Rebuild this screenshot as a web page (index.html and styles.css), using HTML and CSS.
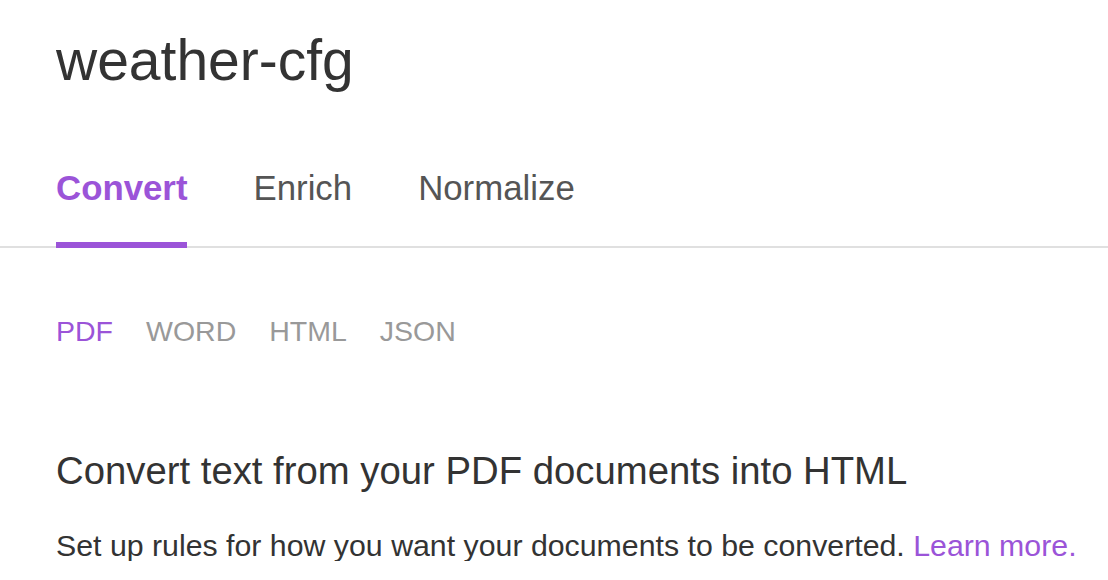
FILE: index.html
```html
<!DOCTYPE html>
<html lang="en">
<head>
<meta charset="utf-8">
<title>weather-cfg</title>
<link rel="stylesheet" href="styles.css">
</head>
<body>
  <header class="page-header">
    <h1 class="title">weather-cfg</h1>
  </header>
  <nav class="tabs">
    <a class="tab tab--active">Convert</a>
    <a class="tab">Enrich</a>
    <a class="tab">Normalize</a>
  </nav>
  <main class="content">
    <nav class="subtabs">
      <a class="subtab subtab--active">PDF</a>
      <a class="subtab">WORD</a>
      <a class="subtab">HTML</a>
      <a class="subtab">JSON</a>
    </nav>
    <h2 class="heading">Convert text from your PDF documents into HTML</h2>
    <p class="desc">Set up rules for how you want your documents to be converted. <a class="link">Learn more.</a></p>
  </main>
</body>
</html>
```
FILE: styles.css
```css
html, body {
  margin: 0;
  padding: 0;
  background: #ffffff;
}
body {
  font-family: "Liberation Sans", Arial, Helvetica, sans-serif;
  color: #333333;
  overflow: hidden;
}
.page-header {
  padding: 32px 56px 0;
}
.title {
  margin: 0;
  font-size: 57px;
  line-height: 57px;
  font-weight: normal;
  color: #333333;
}
.tabs {
  display: flex;
  gap: 66px;
  margin-top: 81px;
  padding: 0 56px;
  border-bottom: 2px solid #e0e0e0;
}
.tab {
  font-size: 34.8px;
  line-height: 35px;
  color: #555555;
  border-bottom: 6px solid transparent;
  margin-bottom: -2px;
  padding-bottom: 37px;
}
.tab--active {
  color: #9b54d8;
  font-weight: bold;
  border-bottom-color: #9b54d8;
}
.content {
  padding: 0 56px;
}
.subtabs {
  display: flex;
  gap: 33px;
  margin-top: 69px;
}
.subtab {
  font-size: 28.5px;
  line-height: 28px;
  color: #999999;
}
.subtab--active {
  color: #9b54d8;
}
.heading {
  margin: 107px 0 0;
  font-size: 38.3px;
  line-height: 38px;
  font-weight: normal;
  color: #333333;
}
.desc {
  margin: 41px 0 0;
  font-size: 30.3px;
  line-height: 30px;
  color: #333333;
  white-space: nowrap;
}
.link {
  color: #9b54d8;
}
```
